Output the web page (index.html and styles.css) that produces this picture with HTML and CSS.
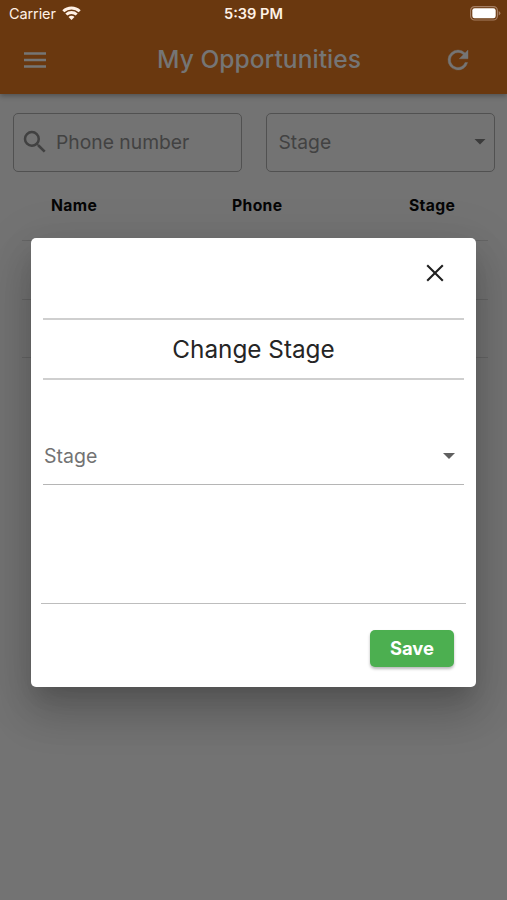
FILE: index.html
```html
<!DOCTYPE html>
<html lang="en">
<head>
<meta charset="utf-8">
<meta name="viewport" content="width=device-width, initial-scale=1">
<title>My Opportunities</title>
<link rel="stylesheet" href="styles.css">
</head>
<body>
<div class="screen">
  <header class="top">
    <div class="status">
      <div class="carrier">
        <span>Carrier</span>
        <svg width="19" height="14" viewBox="0 0 19 14" fill="none" stroke="currentColor" stroke-width="2.9"><path d="M1.3 5.2A12 12 0 0 1 17.7 5.2M4.3 8.5A7.6 7.6 0 0 1 14.7 8.5"/><path d="M9.5 14 6.5 11A4.2 4.2 0 0 1 12.5 11Z" fill="currentColor" stroke="none"/></svg>
      </div>
      <time class="clock">5:39 PM</time>
      <svg class="battery" width="31" height="15" viewBox="0 0 31 15"><rect x=".6" y=".6" width="26.8" height="13.4" rx="4" fill="none" stroke="#a57e62" stroke-width="1.2"/><rect x="2.3" y="2.3" width="23.4" height="10" rx="2.3" fill="#fff"/><path d="M28.7 5v4.6q1.7-.8 1.7-2.3T28.7 5Z" fill="#a57e62"/></svg>
    </div>
    <div class="appbar">
      <svg class="menu" width="24" height="18" viewBox="0 0 24 18"><path d="M1 2.5h22M1 9h22M1 15.5h22" fill="none" stroke="currentColor" stroke-width="2.6"/></svg>
      <h1>My Opportunities</h1>
      <svg class="refresh" width="30" height="30" viewBox="0 0 24 24" fill="currentColor" stroke="currentColor" stroke-width=".3"><path d="M17.65 6.35A7.96 7.96 0 0 0 12 4a8 8 0 1 0 7.73 10h-2.08A6 6 0 1 1 12 6c1.66 0 3.14.69 4.22 1.78L13 11h7V4z"/></svg>
    </div>
  </header>
  <main>
    <div class="filters">
      <div class="field">
        <svg width="30" height="30" viewBox="0 0 24 24" fill="currentColor"><path d="M15.5 14h-.79l-.28-.27A6.47 6.47 0 0 0 16 9.5 6.5 6.5 0 1 0 9.5 16c1.61 0 3.09-.59 4.23-1.57l.27.28v.79l5 4.99L20.49 19zm-6 0a4.5 4.5 0 1 1 0-9 4.5 4.5 0 0 1 0 9z"/></svg>
        <span class="phone">Phone number</span>
      </div>
      <div class="field select"><span class="label">Stage</span><i class="caret"></i></div>
    </div>
    <div class="table">
      <div class="row head"><span>Name</span><span>Phone</span><span>Stage</span></div>
      <div class="row"></div>
      <div class="row"></div>
    </div>
  </main>
  <section class="dialog" role="dialog" aria-label="Change Stage">
    <div class="closebar"><svg width="18" height="18" viewBox="0 0 18 18"><path d="M1.2 1.2 16.8 16.8M16.8 1.2 1.2 16.8" stroke="#202020" stroke-width="2.1"/></svg></div>
    <h2>Change Stage</h2>
    <div class="dropdown"><span class="label">Stage</span><i class="caret"></i></div>
    <footer><button>Save</button></footer>
  </section>
</div>
</body>
</html>
```
FILE: styles.css
```css
* { box-sizing: border-box; }
body { margin: 0; font-family: Inter, "Liberation Sans", sans-serif; }
.screen { position: relative; height: 900px; overflow: hidden; background: #737373; }
.top { height: 94px; background: #6a380f; color: #757575; box-shadow: 0 2px 5px rgba(0,0,0,.3); }
.status { display: grid; grid-template-columns: 1fr auto 1fr; align-items: center; height: 28px; padding: 0 6px 0 9px; color: #fff1e6; font-size: 15px; line-height: 20px; }
.carrier { display: flex; align-items: center; gap: 6px; font-size: 14.5px; letter-spacing: -.1px; }
.carrier svg { margin-top: -2px; }
.clock { margin-right: 3px; font-weight: 600; font-size: 14.6px; }
.battery { justify-self: end; margin-top: -1px; }
.appbar { display: grid; grid-template-columns: 24px 1fr 30px; align-items: center; height: 64px; padding: 0 34px 0 23px; }
h1 { margin: 0 0 2px; padding-left: 28px; text-align: center; font-size: 24.6px; font-weight: 500; line-height: 32px; white-space: nowrap; }
main { padding: 19px 12px 0 13px; }
.filters { display: grid; grid-template-columns: 1fr 1fr; gap: 24px; }
.field { display: flex; align-items: center; height: 59px; padding: 0 0 2px 6px; border: 1.5px solid #515151; border-radius: 5px; color: #424242; font-size: 19.3px; }
.field svg { color: #414141; }
.phone { margin-left: 6px; }
.select { justify-content: space-between; padding: 0 8px 2px 11.5px; }
.caret { width: 12px; height: 6px; background: #3b3b3b; clip-path: polygon(0 0, 100% 0, 50% 100%); }
.table { margin: 0 7px 0 9px; }
.row { height: 58.5px; border-bottom: 1px solid #656565; }
.head { display: grid; grid-template-columns: 181px 177px 1fr; align-items: center; height: 69px; padding: 0 0 1px 29px; color: #050505; font-size: 15.7px; font-weight: 700; letter-spacing: .35px; }
.dialog { position: absolute; left: 31px; top: 238px; width: 445px; height: 449px; border-radius: 5px; background: #fff; box-shadow: 0 14px 19px -8px rgba(0,0,0,.12), 0 26px 42px 3px rgba(0,0,0,.16), 0 10px 50px 9px rgba(0,0,0,.08); }
.closebar { display: flex; justify-content: flex-end; align-items: center; height: 80px; margin: 0 12px; padding: 0 20px 10px 0; }
h2 { display: flex; align-items: center; justify-content: center; height: 62px; margin: 0 12px; border: solid #cfcfcf; border-width: 2px 0; color: #252525; font-size: 24.3px; font-weight: 400; }
.dropdown { display: flex; justify-content: space-between; align-items: flex-end; height: 105px; margin: 0 12px; padding: 0 9px 15px 1px; border-bottom: 1.5px solid #b5b5b5; color: #737373; font-size: 19.5px; line-height: 26px; }
.dropdown .caret { margin-bottom: 10px; background: #606060; }
footer { display: flex; justify-content: flex-end; margin: 118px 10px 0; padding: 26px 12px 0 0; border-top: 1px solid #bdbdbd; }
button { width: 84px; height: 37px; padding: 0; border: 0; border-radius: 5px; background: #4caf50; color: #fff; font: 700 18.4px/37px Inter, sans-serif; box-shadow: 0 2px 3px rgba(0,0,0,.28); }
```
